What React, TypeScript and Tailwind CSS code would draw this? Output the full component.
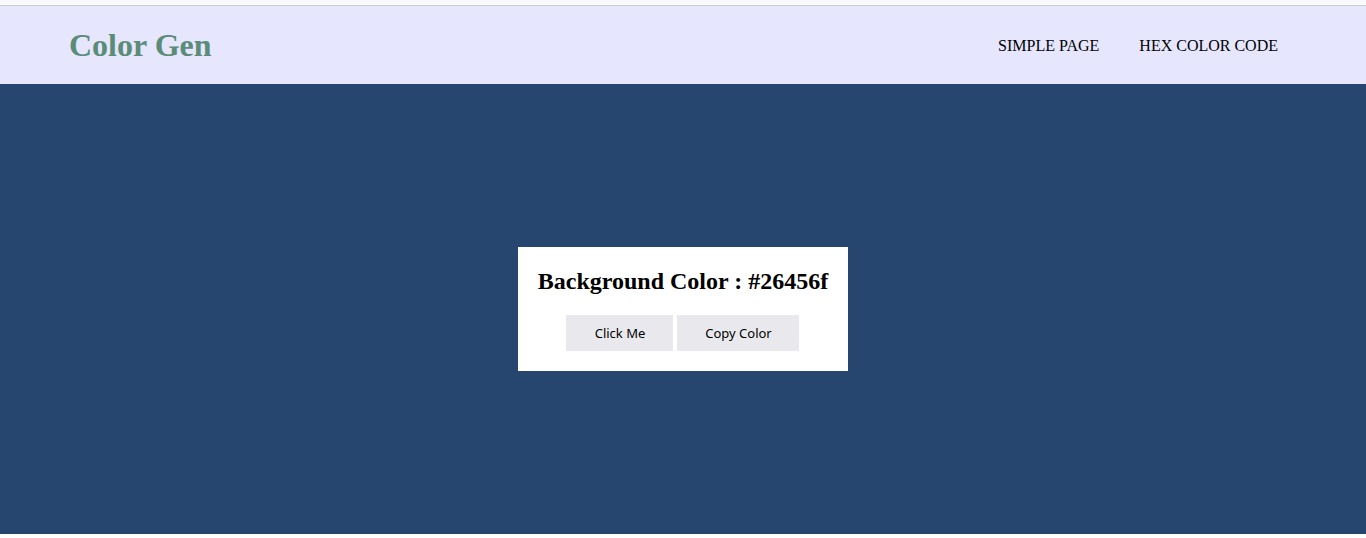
export default function App() {
  return (
    <div className="min-h-screen bg-white">
      <div className="h-[6px] bg-[#f9f9fb] border-b border-[#cccccc]" />
      <header className="h-[78px] bg-[#e6e6fe] flex items-center justify-between pl-[69px] pr-[88px]">
        <h1 className="text-[32px] font-bold text-[#5b8c78] font-['Liberation_Serif',serif] leading-none">
          Color Gen
        </h1>
        <nav className="flex gap-[40px] pt-[2px] font-['Liberation_Serif',serif] text-[16px] text-black">
          <a href="#">SIMPLE PAGE</a>
          <a href="#">HEX COLOR CODE</a>
        </nav>
      </header>
      <main className="h-[450px] bg-[#26456f] flex items-center justify-center">
        <div className="bg-white p-5 flex flex-col items-center">
          <h2 className="font-['Liberation_Serif',serif] font-bold text-[24px] leading-[28px] text-black">
            Background Color : #26456f
          </h2>
          <div className="flex gap-[4px] mt-5">
            <button className="h-9 w-[107px] pt-[2px] bg-[#e9e9ed] text-[13px] text-black font-['Noto_Sans',sans-serif]">
              Click Me
            </button>
            <button className="h-9 w-[122px] pt-[2px] bg-[#e9e9ed] text-[13px] text-black font-['Noto_Sans',sans-serif]">
              Copy Color
            </button>
          </div>
        </div>
      </main>
    </div>
  );
}
